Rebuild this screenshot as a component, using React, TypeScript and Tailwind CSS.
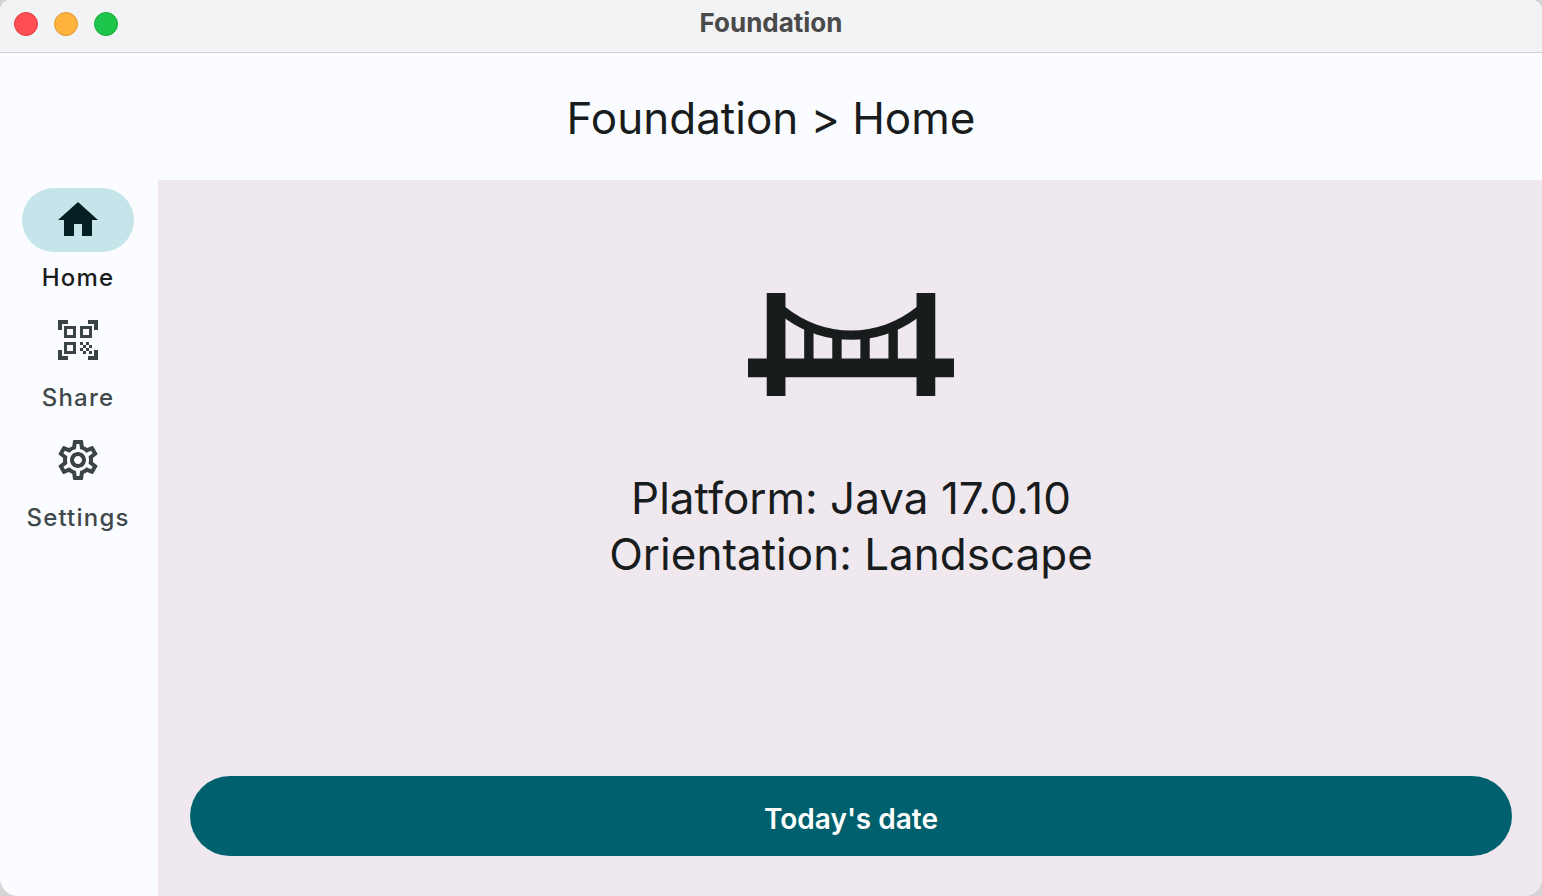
import { useState } from "react";
import type { ReactNode } from "react";
import { MdHome, MdOutlineSettings, MdQrCodeScanner } from "react-icons/md";

type Section = "Home" | "Share" | "Settings";

const sections: { name: Section; icon: ReactNode }[] = [
  { name: "Home", icon: <MdHome className="size-12" aria-hidden="true" /> },
  { name: "Share", icon: <MdQrCodeScanner className="size-12" aria-hidden="true" /> },
  { name: "Settings", icon: <MdOutlineSettings className="size-12" aria-hidden="true" /> },
];

function TitleBar() {
  return (
    <div className="grid h-[53px] shrink-0 grid-cols-[1fr_auto_1fr] items-center border-b border-[#cfd0d1] bg-[#f1f3f4] px-3.5">
      <div className="flex gap-4 pb-1">
        <button type="button" aria-label="Close" className="size-6 rounded-full border border-[#e8393d] bg-[#ff4f52]" />
        <button type="button" aria-label="Minimize" className="size-6 rounded-full border border-[#e0962c] bg-[#ffb23c]" />
        <button type="button" aria-label="Zoom" className="size-6 rounded-full border border-[#12ac36] bg-[#1fc44a]" />
      </div>
      <span className="pb-1.5 text-[26px] leading-8 font-bold text-[#4a4a4a]">Foundation</span>
    </div>
  );
}

function BridgeIcon() {
  return (
    <svg viewBox="0 0 22 11" className="h-[103px] w-[206px]" fill="currentColor" aria-hidden="true">
      <path d="M2 0h2v11H2zM18 0h2v11h-2zM0 7h22v2H0z" />
      <path d="M3.9 1.4L4 1.5A11.05 11.05 0 0 0 18 1.5L18.1 1.4V2.7L18 2.75A12 12 0 0 1 4 2.75L3.9 2.7z" />
      <path d="M6 3.6l1 .5V7.2H6zM9 4.4h1v2.8H9zM12 4.4h1v2.8h-1zM15 4.1l1-.5V7.2h-1z" />
    </svg>
  );
}

export default function App() {
  const [current, setCurrent] = useState<Section>("Home");

  return (
    <div className="min-h-screen bg-[#d4d4d4] font-['Inter','Liberation_Sans',sans-serif] text-[#191c1d]">
      <div className="flex min-h-screen flex-col overflow-hidden rounded-t-[10px] rounded-b-[18px] bg-[#fbfcff]">
        <TitleBar />
        <header className="flex h-[127px] shrink-0 items-center justify-center pt-0.5">
          <h1 className="text-[44px] leading-[56px] [font-feature-settings:'calt'_0]">Foundation &gt; {current}</h1>
        </header>
        <div className="flex grow">
          <nav className="flex w-[158px] shrink-0 flex-col items-center gap-2 pt-2 pr-0.5">
            {sections.map(({ name, icon }) => {
              const active = name === current;
              return (
                <button
                  key={name}
                  type="button"
                  aria-current={active ? "page" : undefined}
                  onClick={() => setCurrent(name)}
                  className={`flex h-28 flex-col items-center gap-2.5 ${active ? "text-[#191c1d]" : "text-[#3f484a]"}`}
                >
                  <span
                    className={`flex h-16 w-28 items-center justify-center rounded-full ${
                      active ? "bg-[#c6e5eb] text-[#041f23]" : "text-[#3a4345]"
                    }`}
                  >
                    {icon}
                  </span>
                  <span className="text-[24px] leading-8 font-medium tracking-wider">{name}</span>
                </button>
              );
            })}
          </nav>
          <main className="flex grow flex-col bg-[#efe8ee] pr-[30px] pb-10 pl-8">
            <div className="flex grow flex-col items-center pt-[113px] text-center">
              <BridgeIcon />
              <p className="mt-[74px] text-[44px] leading-[56px]">
                Platform: Java 17.0.10
                <br />
                Orientation: Landscape
              </p>
            </div>
            <button type="button" className="h-20 rounded-full bg-[#00606d] pt-1.5 text-[28px] font-semibold text-white">
              Today&apos;s date
            </button>
          </main>
        </div>
      </div>
    </div>
  );
}
